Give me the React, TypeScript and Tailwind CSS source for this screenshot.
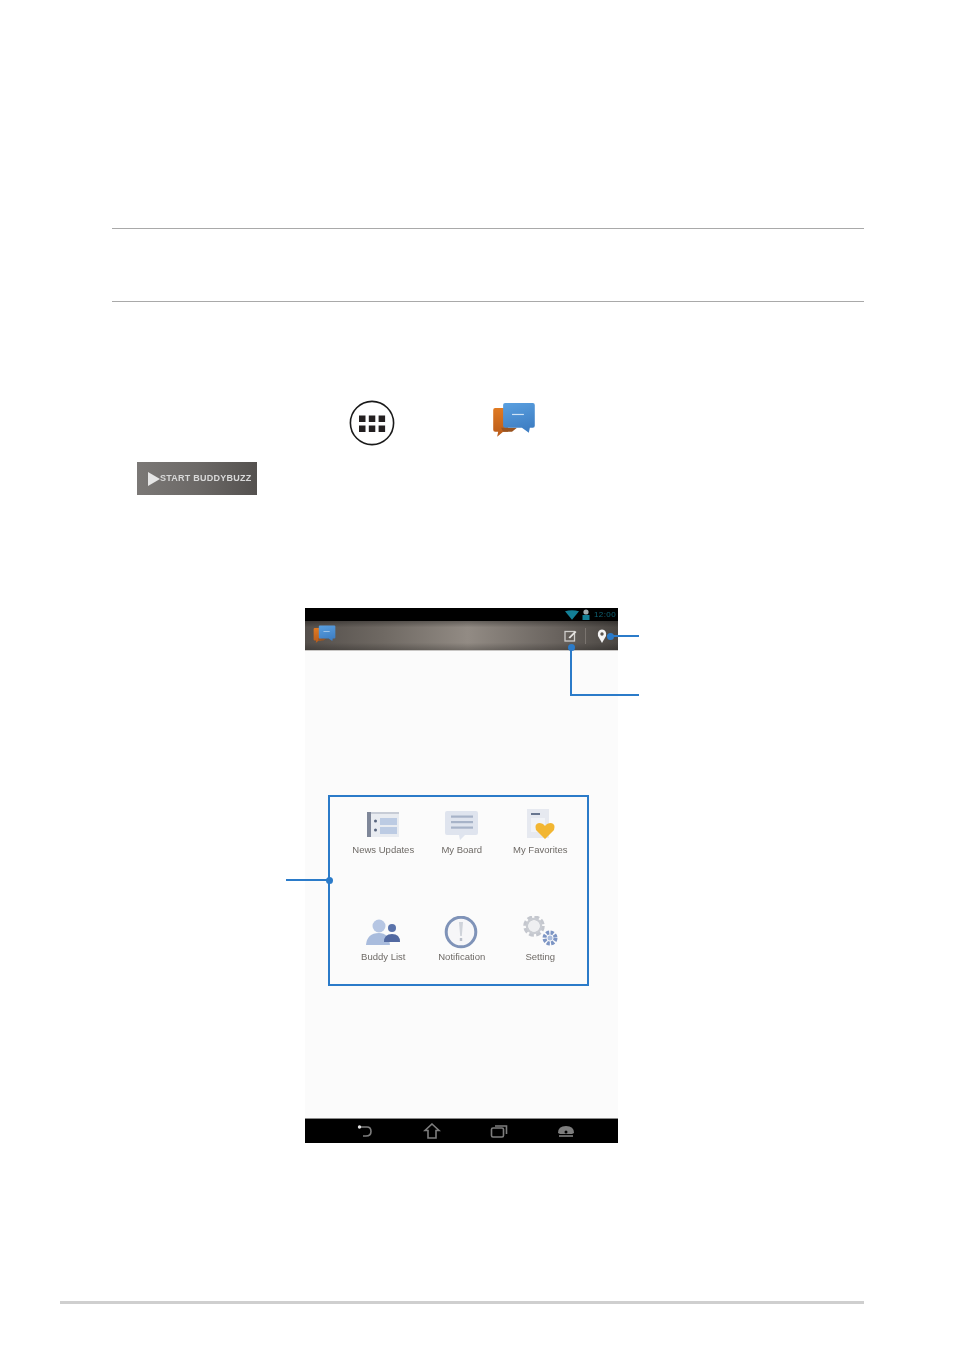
import React from 'react'

const FONT = 'font-["Liberation_Sans",Arial,sans-serif]'

function AllAppsIcon() {
  return (
    <svg width="46" height="46" viewBox="0 0 46 46" className="block">
      <circle cx="23" cy="23" r="21.6" fill="#fff" stroke="#1a1a1a" strokeWidth="1.6" />
      {[10, 19.8, 29.6].map((x) =>
        [15.5, 25.5].map((y) => <rect key={`${x}-${y}`} x={x} y={y} width="6.5" height="6.5" fill="#231f20" />)
      )}
    </svg>
  )
}

function ChatLogo({ size = 44 }: { size?: number }) {
  const id = `blue${size}`
  return (
    <svg width={size} height={size * 0.9} viewBox="0 0 44 40" className="block">
      <defs>
        <linearGradient id={id} x1="0" y1="0" x2="0.3" y2="1">
          <stop offset="0" stopColor="#5aa0e0" />
          <stop offset="1" stopColor="#3f7fc4" />
        </linearGradient>
        <linearGradient id={`${id}o`} x1="0" y1="0" x2="0" y2="1">
          <stop offset="0" stopColor="#e07a22" />
          <stop offset="1" stopColor="#b85a1a" />
        </linearGradient>
      </defs>
      <path d="M3 6 h13 v24 h-5 l-6 5 l1 -5 h-3 q-2 0 -2 -2 v-20 q0 -2 2 -2z" fill={`url(#${id}o)`} />
      <path d="M9 26 h16 l-5 4 h-9z" fill="#9a5420" />
      <path d="M11 3 q0 -2 2 -2 h28 q2 0 2 2 v21 q0 2 -2 2 h-3 l-1 5 l-7 -5 h-17 q-2 0 -2 -2z" fill={`url(#${id})`} />
      <rect x="20" y="12" width="12" height="1.2" fill="#cfe3f6" />
    </svg>
  )
}

function StatusIcons() {
  return (
    <div className="flex h-full items-center justify-end gap-[3px] overflow-hidden pr-[2px] blur-[0.6px]">
      <svg width="14" height="10" viewBox="0 0 15 10">
        <path d="M0 1 Q7.5 -1 15 1 L7.5 10z" fill="#137f96" />
      </svg>
      <svg width="8" height="11" viewBox="0 0 8 11">
        <circle cx="4" cy="3" r="2.6" fill="#a2adaf" />
        <rect x="0.5" y="6" width="7" height="5" fill="#137f96" />
      </svg>
      <span className={`${FONT} ml-[1px] text-[8px] leading-none tracking-[0.4px] text-[#0f6475]`}>12:00</span>
    </div>
  )
}

function NewsIcon() {
  return (
    <svg width="36" height="32" viewBox="0 0 36 32">
      <rect x="2" y="3" width="32" height="25" fill="#e9ecf1" />
      <rect x="2" y="3" width="4" height="25" fill="#7f8799" />
      <rect x="6" y="3" width="28" height="2" fill="#c7ccd6" />
      <rect x="15" y="9" width="17" height="7" fill="#bccbe3" />
      <rect x="15" y="18" width="17" height="7" fill="#bccbe3" />
      <circle cx="10.5" cy="12" r="1.5" fill="#59667f" />
      <circle cx="10.5" cy="21" r="1.5" fill="#59667f" />
    </svg>
  )
}

function BoardIcon() {
  return (
    <svg width="36" height="32" viewBox="0 0 36 32">
      <path d="M3 2 h29 q2 0 2 2 v20 q0 2 -2 2 h-11 l-5 5 l-1 -5 h-12 q-2 0 -2 -2 v-20 q0 -2 2 -2z" fill="#dfe4ee" />
      <rect x="7" y="6.5" width="22" height="2.2" fill="#a7b3c8" />
      <rect x="7" y="12" width="22" height="2.2" fill="#a7b3c8" />
      <rect x="7" y="17.5" width="22" height="2.2" fill="#a7b3c8" />
    </svg>
  )
}

function FavoritesIcon() {
  return (
    <svg width="36" height="32" viewBox="0 0 36 32">
      <rect x="5" y="0" width="22" height="29" fill="#e6e9f0" />
      <rect x="9" y="4" width="9" height="2" fill="#68768f" />
      <rect x="9" y="9" width="14" height="14" fill="#f1f3f7" />
      <path d="M23 30 L14 21 Q12 15 17 14 Q21 14 23 17 Q25 14 29 14 Q34 15 32 21z" fill="#f2b632" />
    </svg>
  )
}

function BuddyIcon() {
  return (
    <svg width="36" height="32" viewBox="0 0 36 32">
      <circle cx="14" cy="10" r="6.5" fill="#b6c6e3" />
      <path d="M1 29 Q2 17 14 17 Q24 17 25 29z" fill="#a9bcdd" />
      <circle cx="27" cy="12" r="4" fill="#5a73ab" />
      <path d="M19 26 Q19 18 27 18 Q35 18 35 26z" fill="#5269a1" />
    </svg>
  )
}

function NotificationIcon() {
  return (
    <svg width="36" height="34" viewBox="0 0 36 34">
      <circle cx="17" cy="16" r="14.8" fill="#f6f6f8" stroke="#7f93b8" strokeWidth="3" />
      <path d="M15 6 h4 l-1.2 14 h-1.6z" fill="#cfd3da" />
      <rect x="15.8" y="22" width="2.4" height="3" fill="#b8bec9" />
    </svg>
  )
}

function SettingIcon() {
  return (
    <svg width="36" height="32" viewBox="0 0 36 32">
      <circle cx="12" cy="10" r="8.5" fill="none" stroke="#c4c7ce" strokeWidth="4.5" strokeDasharray="4.5 2.2" />
      <circle cx="12" cy="10" r="7" fill="none" stroke="#c9ccd2" strokeWidth="2.5" />
      <circle cx="12" cy="10" r="5.5" fill="#eeeff1" />
      <circle cx="28" cy="22" r="5.5" fill="none" stroke="#7d95c4" strokeWidth="4" strokeDasharray="3 1.3" />
      <circle cx="28" cy="22" r="2.5" fill="#a9bbdc" />
    </svg>
  )
}

const items = [
  { label: 'News Updates', icon: <NewsIcon /> },
  { label: 'My Board', icon: <BoardIcon /> },
  { label: 'My Favorites', icon: <FavoritesIcon /> },
  { label: 'Buddy List', icon: <BuddyIcon /> },
  { label: 'Notification', icon: <NotificationIcon /> },
  { label: 'Setting', icon: <SettingIcon /> },
]

function NavBar() {
  return (
    <div className="flex h-[24px] items-center bg-black pl-[26px] blur-[0.5px]">
      <div className="grid grid-cols-[67px_67px_67px_67px] justify-items-center">
        <svg width="18" height="16" viewBox="0 0 18 16" fill="none" stroke="#7d7d7d" strokeWidth="1.6">
          <path d="M3 4 H11 Q15 4 15 8.5 Q15 13 10 13 H7" />
          <circle cx="3.5" cy="4" r="1.7" fill="#e5e5e5" stroke="none" />
        </svg>
        <svg width="18" height="16" viewBox="0 0 18 16" fill="none" stroke="#7d7d7d" strokeWidth="1.6">
          <path d="M9 1 L16 7.5 H13 V15 H5 V7.5 H2z" />
        </svg>
        <svg width="18" height="16" viewBox="0 0 18 16" fill="none" stroke="#7d7d7d" strokeWidth="1.6">
          <rect x="1.5" y="5" width="12" height="9" rx="1.5" />
          <path d="M5 3 H16.5 V11" />
        </svg>
        <svg width="18" height="16" viewBox="0 0 18 16">
          <path d="M1 10 Q1 3 9 3 Q17 3 17 10 L15 11 H3z" fill="#7d7d7d" />
          <rect x="2" y="12" width="14" height="2" fill="#666" />
          <circle cx="9" cy="9" r="1.5" fill="#000" />
        </svg>
      </div>
    </div>
  )
}

function Phone() {
  return (
    <div className="relative ml-[305px] w-[313px]">
      <div className="h-[13px] bg-black">
        <StatusIcons />
      </div>
      <div className="flex h-[30px] items-center border-b border-b-[#c9c7c5] bg-[linear-gradient(180deg,rgba(0,0,0,0.3),transparent_22%,transparent_75%,rgba(0,0,0,0.22)),linear-gradient(90deg,#544f4b_0%,#6f6963_25%,#928b84_52%,#6a645f_80%,#4a4642_100%)] pl-[8px] pr-[11px]">
        <div className="blur-[0.5px]">
          <ChatLogo size={23} />
        </div>
        <div className="ml-auto flex items-center blur-[0.5px]">
          <svg width="13" height="12" viewBox="0 0 13 12" fill="none">
            <rect x="1" y="1.5" width="9.5" height="9.5" stroke="#cfcdcb" strokeWidth="1.3" />
            <path d="M4.5 7.5 L11 1 L12.5 2 L6 8.5 Z" fill="#e6e4e2" />
          </svg>
          <div className="ml-[8px] mr-[11px] h-[16px] w-px bg-[#7a746f]" />
          <svg width="10" height="14" viewBox="0 0 10 14">
            <path d="M5 14 L1 7 Q0 1 5 0.5 Q10 1 9 7z" fill="#f4f4f4" />
            <circle cx="5" cy="5" r="1.7" fill="#5a5551" />
          </svg>
        </div>
      </div>
      <div className="h-[467px] bg-[#fbfbfb] pl-[23px] pt-[144px]">
        <div className="h-[191px] w-[261px] border-2 border-[#2b7bc9] pl-[14px] pt-[12px]">
          <div className="grid grid-cols-[78.5px_78.5px_78.5px] grid-rows-[107px_64px] blur-[0.7px]">
            {items.map((item) => (
              <div key={item.label} className="flex flex-col items-center">
                <div className="h-[32px]">{item.icon}</div>
                <div className={`${FONT} mt-[3px] whitespace-nowrap text-[9.5px] leading-[12px] text-[#6e6a66]`}>
                  {item.label}
                </div>
              </div>
            ))}
          </div>
        </div>
      </div>
      <div className="h-px bg-[#8a8a8a]" />
      <NavBar />

      {/* callouts */}
      <div className="absolute left-[302px] top-[27px] h-[2px] w-[32px] bg-[#2b7bc9]" />
      <div className="absolute left-[302px] top-[24.5px] h-[7px] w-[7px] rounded-full bg-[#2b7bc9]" />
      <div className="absolute left-[265px] top-[38px] h-[50px] w-[69px] border-b-2 border-l-2 border-[#2b7bc9]" />
      <div className="absolute left-[262.5px] top-[35.5px] h-[7px] w-[7px] rounded-full bg-[#2b7bc9]" />
      <div className="absolute left-[-19px] top-[271px] h-[2px] w-[42px] bg-[#2b7bc9]" />
      <div className="absolute left-[20.5px] top-[268.5px] h-[7px] w-[7px] rounded-full bg-[#2b7bc9]" />
    </div>
  )
}

export default function App() {
  return (
    <div className="h-[1356px] w-[954px] overflow-hidden bg-white pt-[228px]">
      <div className="ml-[112px] h-[74px] w-[752px] border-y border-[#a9a9a9]" />

      <div className="ml-[349px] mt-[98px] flex items-start">
        <AllAppsIcon />
        <div className="ml-[97px] mt-[2px] blur-[0.5px]">
          <ChatLogo size={44} />
        </div>
      </div>

      <div className="ml-[137px] mt-[16px] flex h-[33px] w-[120px] items-center bg-[linear-gradient(90deg,#7b7876,#6c6967_50%,#54514f)] pl-[11px]">
        <div className="flex items-center blur-[0.6px]">
          <svg width="12" height="14" viewBox="0 0 12 14">
            <path d="M0 0 L12 7 L0 14z" fill="#e6e6e6" />
          </svg>
          <span className={`${FONT} whitespace-nowrap text-[9px] font-bold leading-none tracking-[0.25px] text-[#d9d9d9]`}>
            START BUDDYBUZZ
          </span>
        </div>
      </div>

      <div className="mt-[113px]">
        <Phone />
      </div>

      <div className="ml-[60px] mt-[158px] h-[3px] w-[804px] bg-[#cfcfcf]" />
    </div>
  )
}
